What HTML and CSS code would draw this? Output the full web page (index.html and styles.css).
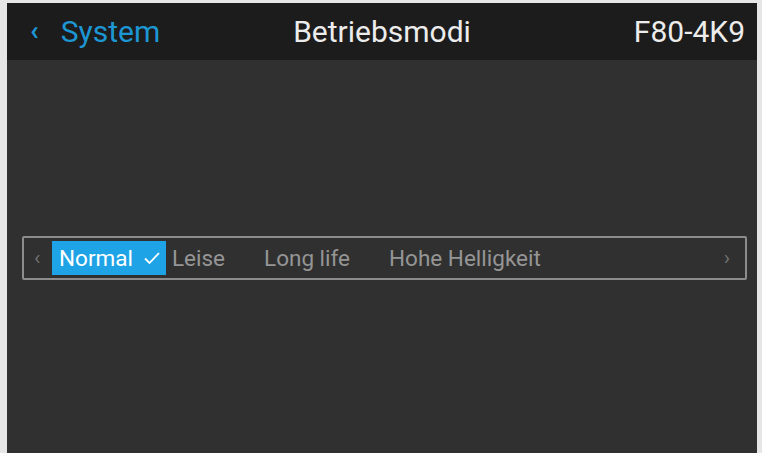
FILE: index.html
```html
<!DOCTYPE html>
<html>
<head>
<meta charset="utf-8">
<link rel="stylesheet" href="styles.css">
</head>
<body>
<div class="frame">
  <div class="screen">
    <header class="topbar">
      <div class="back"><span class="chev">‹</span><span>System</span></div>
      <div class="title">Betriebsmodi</div>
      <div class="model">F80-4K9</div>
    </header>
    <main class="content">
      <div class="selector">
        <span class="arrow left">‹</span>
        <div class="options">
          <span class="opt active">Normal <svg class="check" width="18" height="14" viewBox="0 0 18 14"><path d="M2 7.5 L6.5 12 L16 2" fill="none" stroke="#fff" stroke-width="1.8"/></svg></span>
          <span class="opt">Leise</span>
          <span class="opt">Long life</span>
          <span class="opt">Hohe Helligkeit</span>
        </div>
        <span class="arrow">›</span>
      </div>
    </main>
  </div>
</div>
</body>
</html>
```
FILE: styles.css
```css
html, body {
  margin: 0;
  padding: 0;
  width: 762px;
  height: 453px;
  overflow: hidden;
  background: #e6e6e6;
  font-family: Roboto, "Liberation Sans", sans-serif;
}
.frame {
  padding: 3px 5px 0 7px;
  height: 450px;
}
.screen {
  height: 100%;
  background: #303030;
  display: flex;
  flex-direction: column;
}
.topbar {
  height: 57px;
  background: #1c1c1c;
  display: flex;
  align-items: center;
  justify-content: space-between;
  padding: 0 12px 0 23px;
  font-size: 30px;
  position: relative;
}
.back {
  color: #1d97d4;
  display: flex;
  align-items: center;
  gap: 22px;
}
.chev {
  font-size: 28px;
  font-weight: 700;
  margin-top: -3px;
}
.title {
  color: #ececec;
  position: absolute;
  left: 0;
  right: 0;
  text-align: center;
  pointer-events: none;
}
.model {
  color: #ececec;
}
.content {
  flex: 1;
  display: flex;
  align-items: flex-start;
  padding: 176px 10px 0 15px;
}
.selector {
  flex: 1;
  height: 40px;
  border: 2px solid #8c8c8c;
  border-radius: 2px;
  display: flex;
  align-items: center;
  padding: 0 6px;
  color: #959595;
}
.arrow {
  font-size: 21px;
  color: #707070;
  width: 24px;
  text-align: center;
}
.arrow.left {
  box-sizing: border-box;
  text-align: left;
  padding-left: 4px;
  width: 22px;
}
.options {
  flex: 1;
  display: flex;
  align-items: center;
  font-size: 22.5px;
}
.opt {
  margin-right: 39px;
}
.opt.active {
  background: #1ea4e6;
  color: #ffffff;
  height: 34px;
  display: flex;
  align-items: center;
  padding: 0 5px 0 7px;
  margin-right: 6px;
  gap: 10px;
}
.check {
  display: block;
}
```
